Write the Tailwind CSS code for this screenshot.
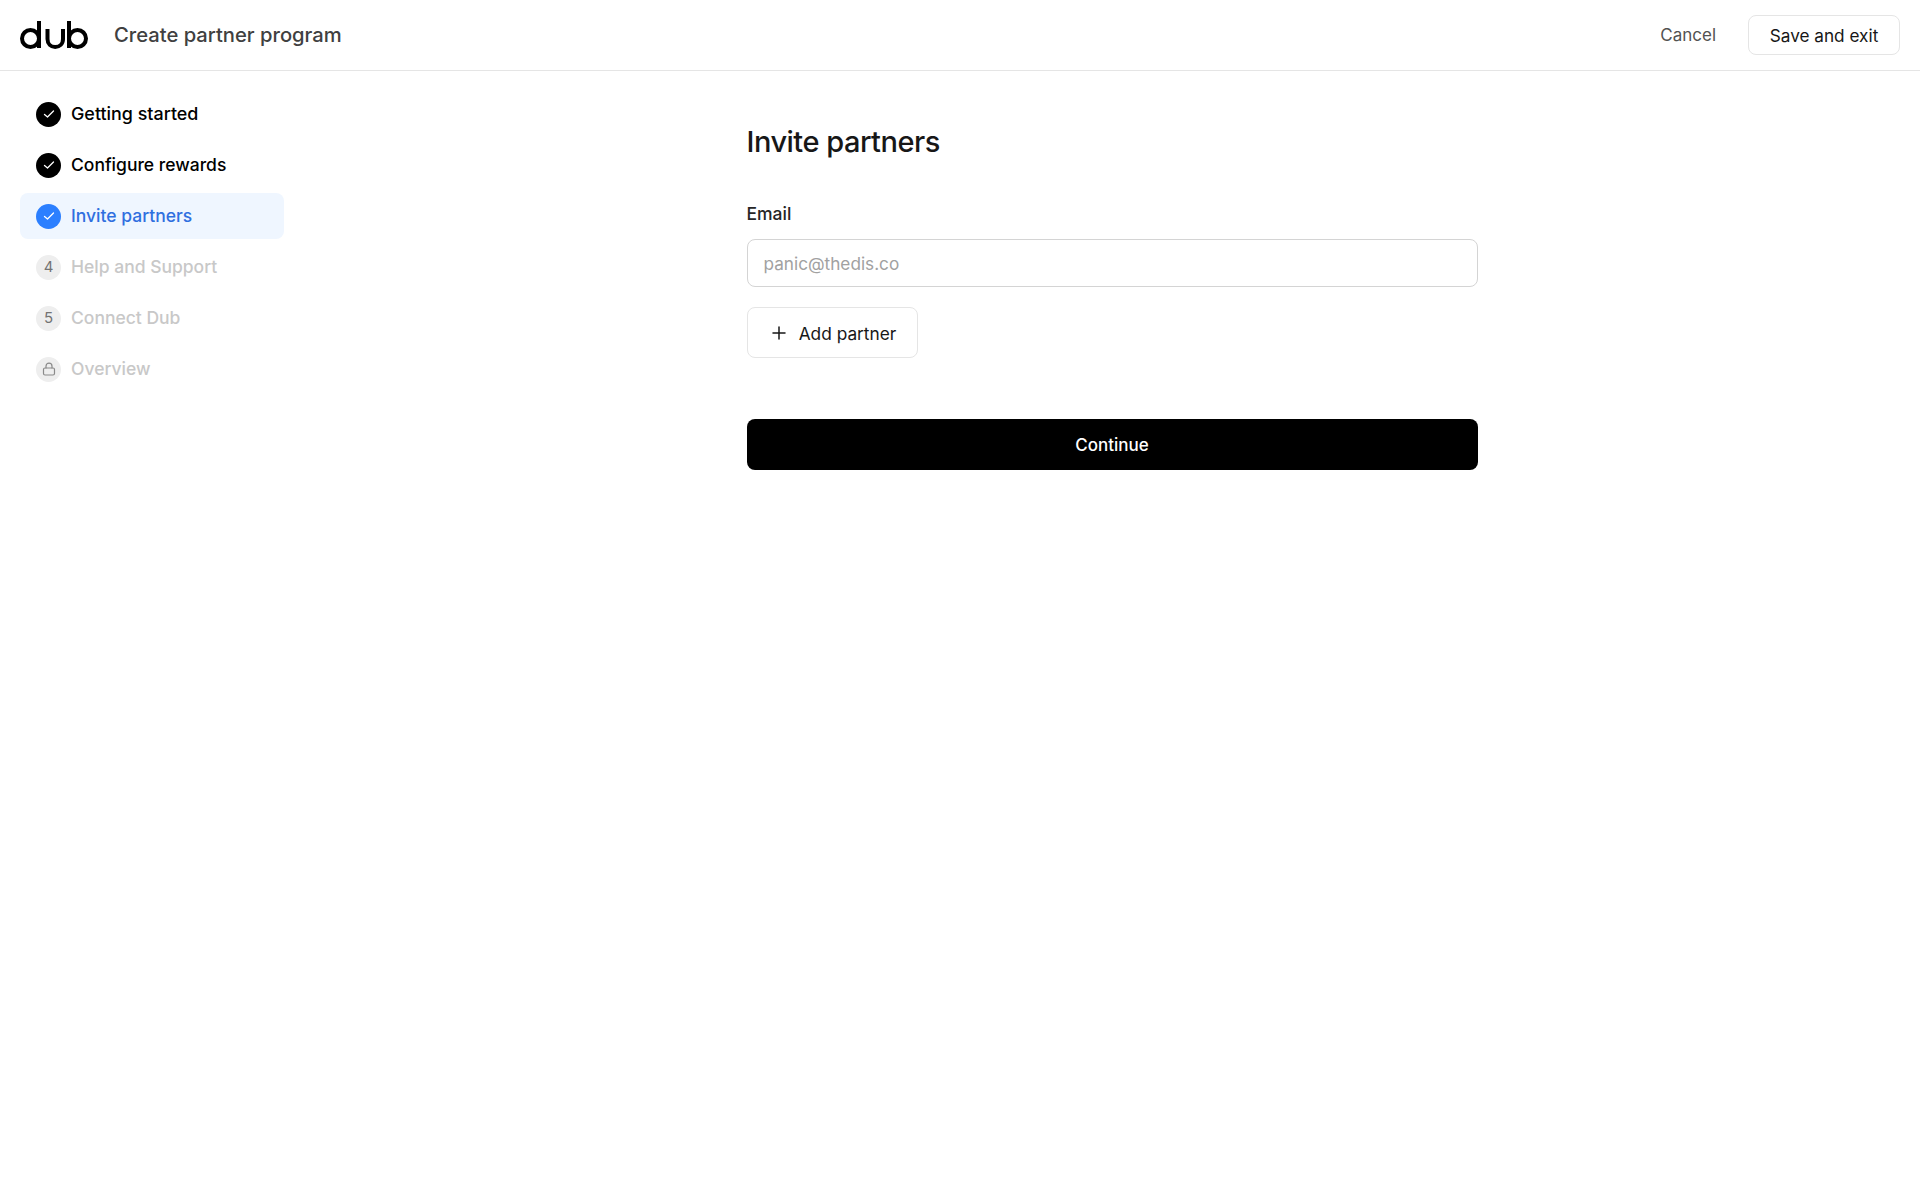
<!DOCTYPE html>
<html lang="en">
<head>
  <meta charset="UTF-8" />
  <meta name="viewport" content="width=device-width, initial-scale=1.0" />
  <title>Create partner program</title>
  <script src="https://cdn.jsdelivr.net/npm/@tailwindcss/browser@4"></script>
</head>
<body class="bg-white text-neutral-900 font-['Inter',sans-serif] min-h-screen">
  <header class="h-[71px] border-b border-neutral-200 flex items-center justify-between pl-5 pr-5">
    <div class="flex items-center gap-[26px]">
      <!-- logo -->
      <svg role="img" aria-label="dub" width="68" height="30" viewBox="0 0 68 30" fill="none" stroke="#000" stroke-width="4" class="mt-[-1px]">
        <circle cx="10.5" cy="18.5" r="8.5" />
        <path d="M19 1V28" />
        <path d="M27.5 9V19C27.5 24 31 27 35.2 27C39.4 27 43 24 43 19V9" />
        <path d="M49 1V28" />
        <circle cx="57.5" cy="18.5" r="8.5" />
      </svg>
      <span class="text-[20.2px] font-medium text-neutral-700 leading-7">Create partner program</span>
    </div>
    <div class="flex items-center gap-8">
      <button class="pt-[2px] text-[17px] text-neutral-600">Cancel</button>
      <button class="pt-[2px] h-10 w-[152px] rounded-lg border border-neutral-200 bg-white text-[17.2px] text-neutral-900">Save and exit</button>
    </div>
  </header>

  <div class="flex">
    <aside class="w-[304px] shrink-0 pl-5 pr-5 pt-[20px] flex flex-col gap-[5px]">
      <div class="h-[46px] flex items-center gap-[10px] px-4 rounded-lg">
        <span class="size-[25px] rounded-full bg-black flex items-center justify-center">
          <svg width="14" height="14" viewBox="0 0 14 14" fill="none" stroke="#fff" stroke-width="1.3" stroke-linecap="round" stroke-linejoin="round"><path d="M2.5 7.5L5.5 10L11.5 4" /></svg>
        </span>
        <span class="text-[17.9px] font-medium text-black">Getting started</span>
      </div>
      <div class="h-[46px] flex items-center gap-[10px] px-4 rounded-lg">
        <span class="size-[25px] rounded-full bg-black flex items-center justify-center">
          <svg width="14" height="14" viewBox="0 0 14 14" fill="none" stroke="#fff" stroke-width="1.3" stroke-linecap="round" stroke-linejoin="round"><path d="M2.5 7.5L5.5 10L11.5 4" /></svg>
        </span>
        <span class="text-[17.5px] font-medium text-black">Configure rewards</span>
      </div>
      <div class="h-[46px] flex items-center gap-[10px] px-4 rounded-lg bg-blue-50">
        <span class="size-[25px] rounded-full bg-blue-500 flex items-center justify-center">
          <svg width="14" height="14" viewBox="0 0 14 14" fill="none" stroke="#fff" stroke-width="1.3" stroke-linecap="round" stroke-linejoin="round"><path d="M2.5 7.5L5.5 10L11.5 4" /></svg>
        </span>
        <span class="text-[17.5px] font-medium text-[#2f6fdf]">Invite partners</span>
      </div>
      <div class="h-[46px] flex items-center gap-[10px] px-4 rounded-lg">
        <span class="size-[25px] rounded-full bg-[#eeeeee] flex items-center justify-center text-[15px] text-neutral-500">4</span>
        <span class="text-[17.5px] font-medium text-[#c8c8c8]">Help and Support</span>
      </div>
      <div class="h-[46px] flex items-center gap-[10px] px-4 rounded-lg">
        <span class="size-[25px] rounded-full bg-[#eeeeee] flex items-center justify-center text-[15px] text-neutral-500">5</span>
        <span class="text-[17.5px] font-medium text-[#c8c8c8]">Connect Dub</span>
      </div>
      <div class="h-[46px] flex items-center gap-[10px] px-4 rounded-lg">
        <span class="size-[25px] rounded-full bg-[#eeeeee] flex items-center justify-center">
          <svg width="14" height="14" viewBox="0 0 14 14" fill="none" stroke="#8a8a8a" stroke-width="1.2" stroke-linecap="round" stroke-linejoin="round"><rect x="1.5" y="6" width="11" height="7" rx="1.5" /><path d="M4 6V4.2C4 2.4 5.3 1.2 7 1.2C8.7 1.2 10 2.4 10 4.2V6" /></svg>
        </span>
        <span class="text-[17.5px] font-medium text-[#c8c8c8]">Overview</span>
      </div>
    </aside>

    <main class="flex-1 flex justify-center pr-0">
      <div class="w-[731px] pt-[50px]">
        <h1 class="text-[29px] leading-[42px] font-medium text-neutral-900 tracking-[-0.5px]">Invite partners</h1>
        <label class="block mt-[38px] pt-px text-[17.5px] leading-6 font-medium text-neutral-800">Email</label>
        <input type="email" placeholder="panic@thedis.co" class="mt-[13px] block w-full h-12 rounded-lg border border-neutral-300 bg-white px-4 text-[17.2px] placeholder:text-neutral-400 outline-none" />
        <button class="mt-5 pt-[2px] pl-[3px] h-[51px] w-[171px] rounded-lg border border-neutral-200 bg-white flex items-center justify-center gap-3 text-[17.3px] text-neutral-900">
          <svg class="mt-[-2px]" width="16" height="16" viewBox="0 0 16 16" fill="none" stroke="#171717" stroke-width="1.5" stroke-linecap="round"><path d="M8 2V14M2 8H14" /></svg>
          Add partner
        </button>
        <button class="mt-[61px] pt-[2px] h-[51px] w-full rounded-lg bg-black text-[17px] font-medium text-white">Continue</button>
      </div>
    </main>
  </div>
</body>
</html>
